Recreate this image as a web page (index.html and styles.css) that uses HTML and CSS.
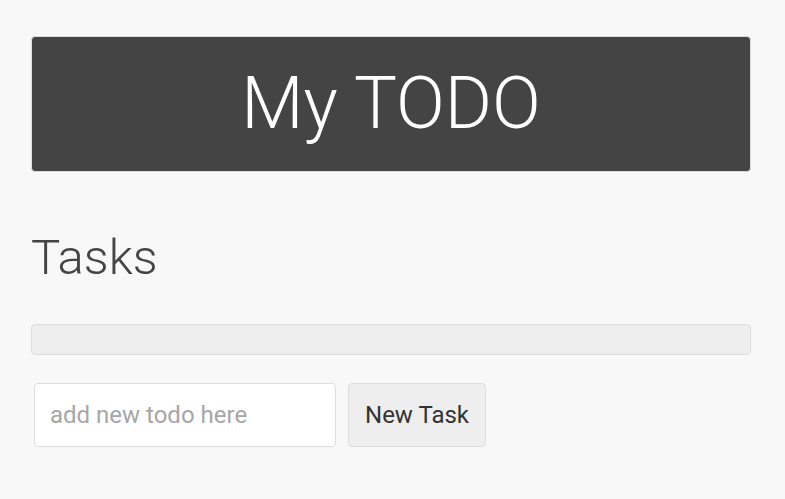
FILE: index.html
```html
<!DOCTYPE html>
<html>
<head>
<meta charset="utf-8">
<link rel="stylesheet" href="styles.css">
</head>
<body>
<div class="page">
  <header class="banner"><h1 class="banner-title">My TODO</h1></header>
  <h2 class="section-title">Tasks</h2>
  <div class="task-list"></div>
  <form class="new-task">
    <input class="new-task-input" type="text" placeholder="add new todo here">
    <button class="new-task-btn" type="button">New Task</button>
  </form>
</div>
</body>
</html>
```

FILE: styles.css
```css
html, body {
  margin: 0;
  padding: 0;
  background: #f8f8f8;
  font-family: Roboto, "Liberation Sans", sans-serif;
}
.page {
  width: 720px;
  padding: 36px 0 0 31px;
  display: flex;
  flex-direction: column;
}
.banner {
  box-sizing: border-box;
  height: 136px;
  background: #444444;
  border: 1px solid #dddddd;
  border-radius: 4px;
  display: flex;
  align-items: center;
  justify-content: center;
}
.banner-title {
  margin: 0;
  font-weight: 300;
  font-size: 72px;
  line-height: 1;
  color: #ffffff;
}
.section-title {
  margin: 56px 0 0 0;
  font-weight: 300;
  font-size: 49px;
  line-height: 60px;
  color: #444444;
}
.task-list {
  box-sizing: border-box;
  height: 31px;
  margin-top: 36px;
  background: #eeeeee;
  border: 1px solid #dddddd;
  border-radius: 4px;
}
.new-task {
  display: flex;
  gap: 12px;
  margin: 28px 0 0 3px;
}
.new-task-input {
  box-sizing: border-box;
  width: 302px;
  height: 64px;
  padding: 0 15px;
  background: #ffffff;
  border: 1px solid #dddddd;
  border-radius: 4px;
  font-family: Roboto, "Liberation Sans", sans-serif;
  font-size: 24px;
  color: #333;
  outline: none;
}
.new-task-input::placeholder {
  color: #a6a6a6;
}
.new-task-btn {
  box-sizing: border-box;
  width: 138px;
  height: 64px;
  background: #eeeeee;
  border: 1px solid #dddddd;
  border-radius: 4px;
  font-family: Roboto, "Liberation Sans", sans-serif;
  font-size: 24px;
  color: #333333;
  padding: 0;
}
```
